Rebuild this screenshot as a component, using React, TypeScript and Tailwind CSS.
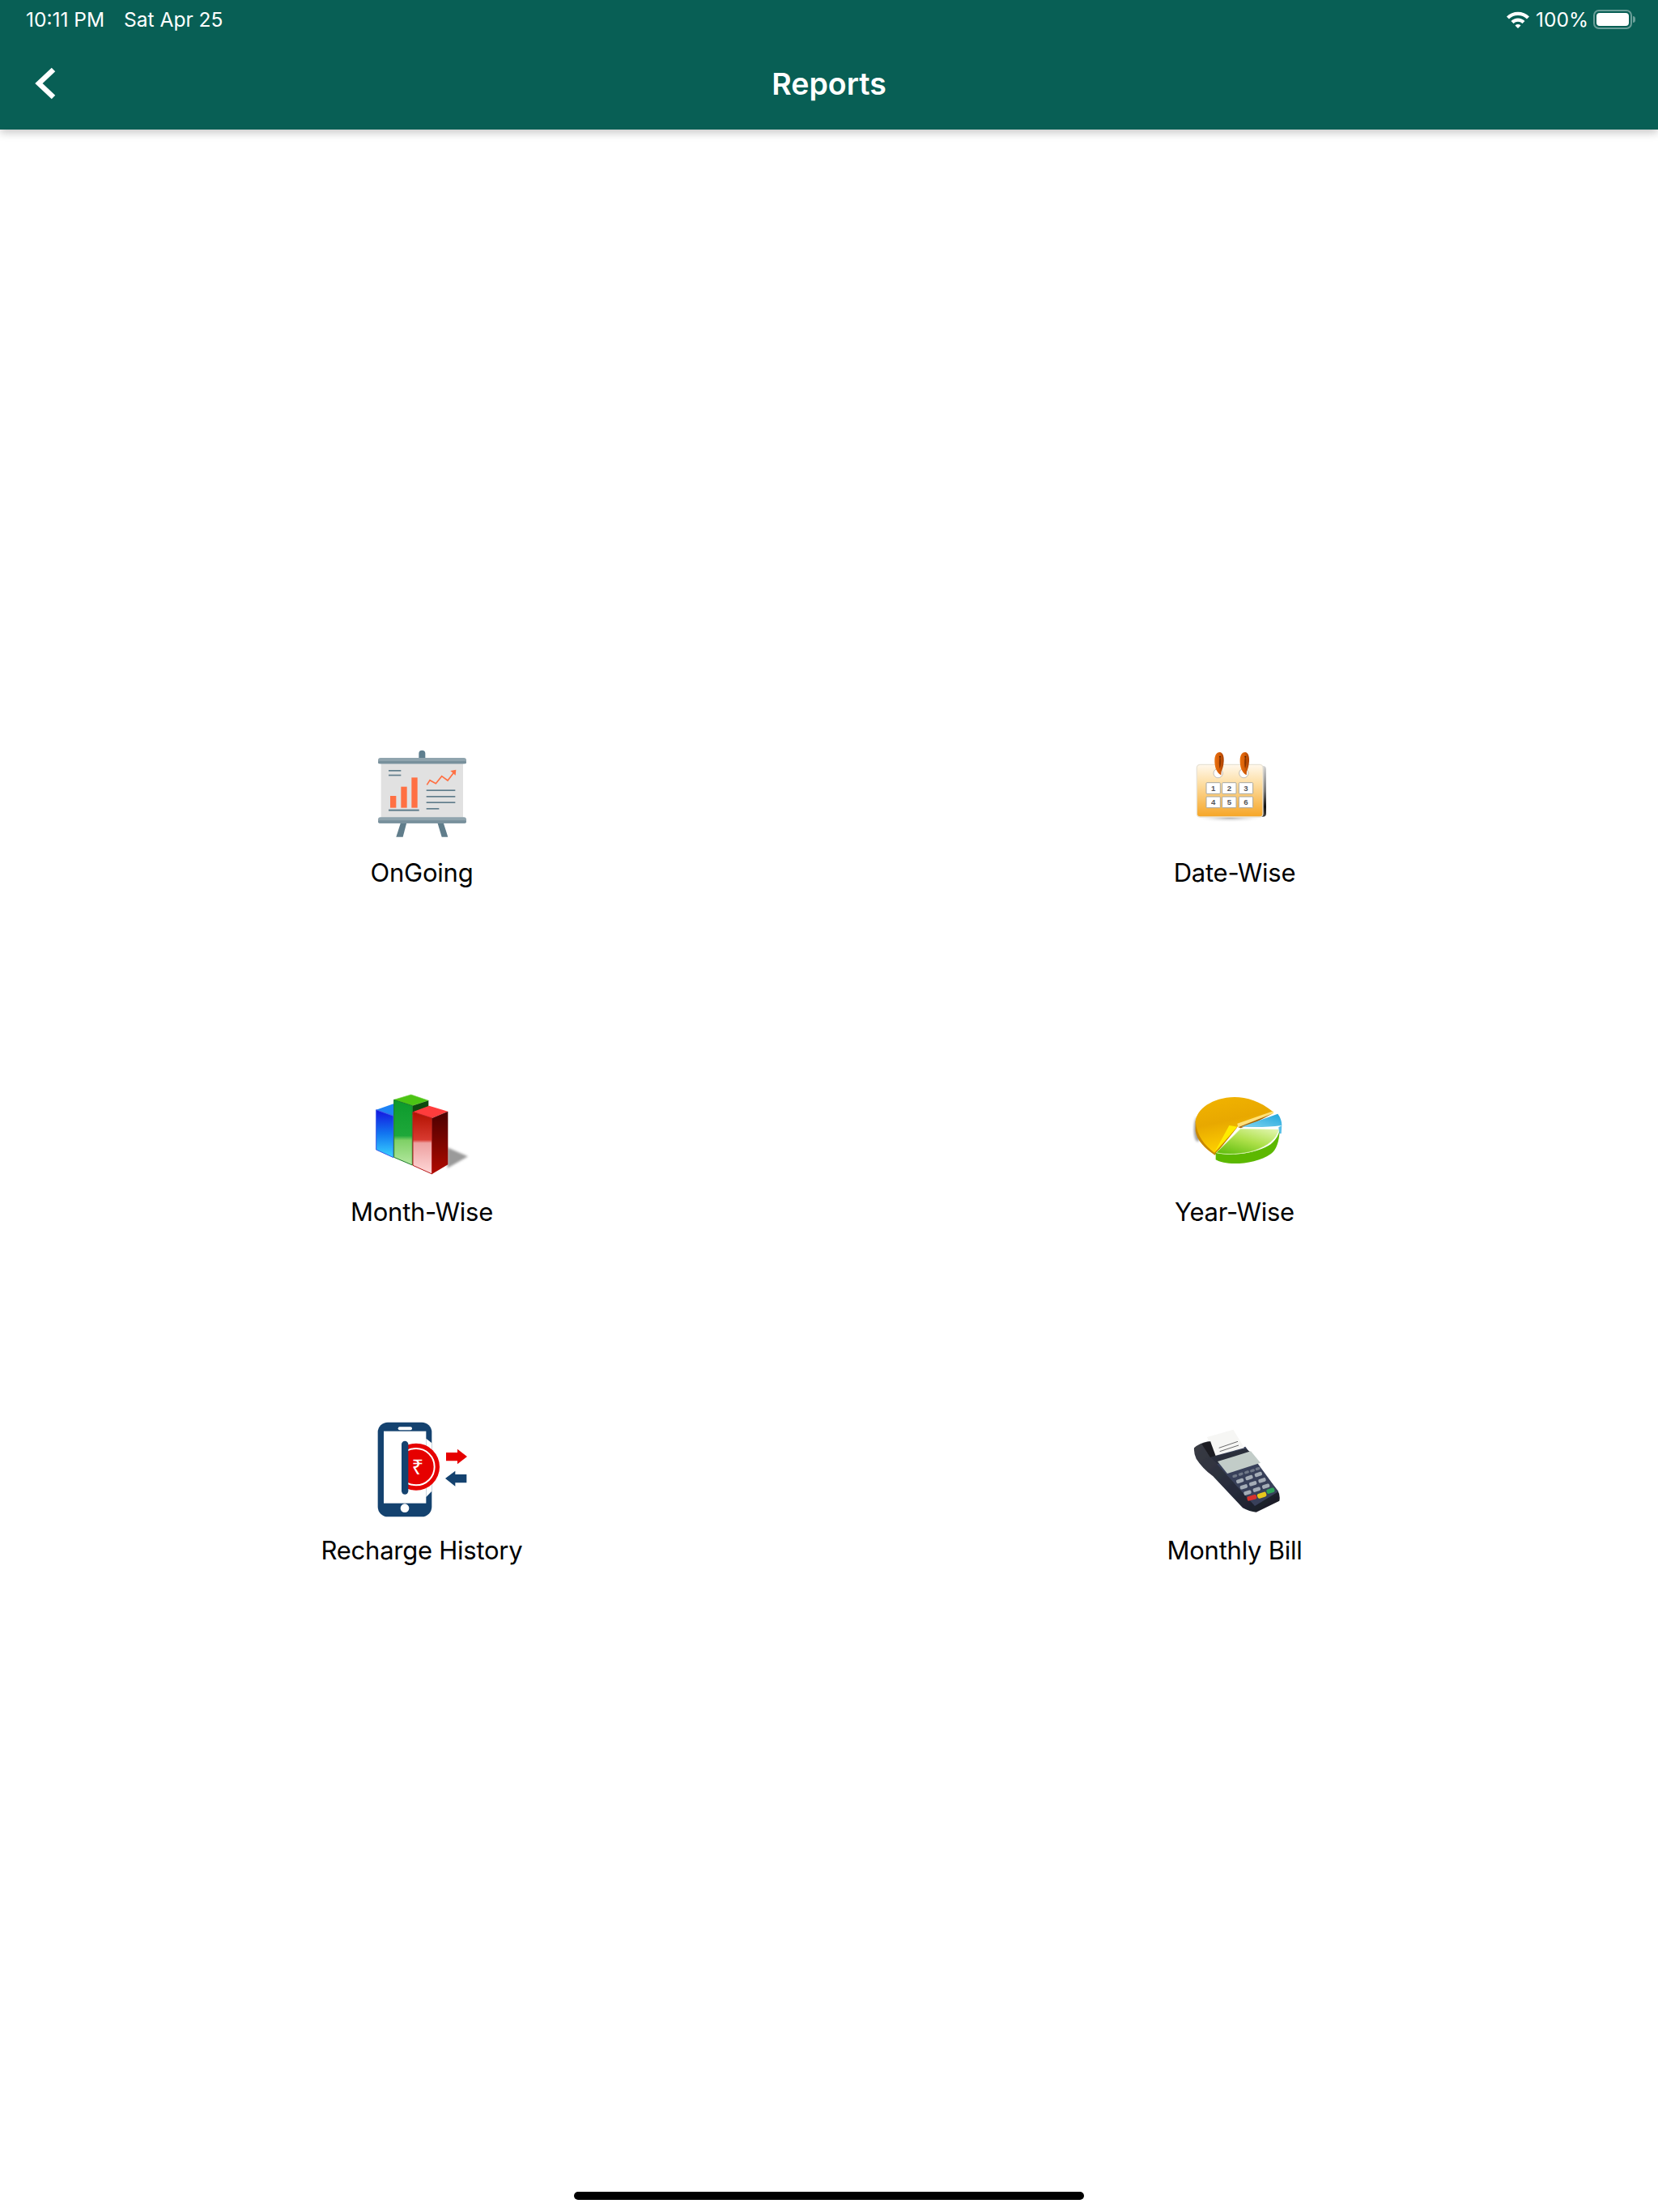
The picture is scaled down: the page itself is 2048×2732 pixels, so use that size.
import React from "react";

function OnGoingIcon() {
  return (
    <svg width={130} height={130} viewBox="80 18 390 390">
      <rect x={264} y={50} width={24} height={40} rx={12} fill="#5f7f8f" />
      <rect x={124} y={95} width={304} height={208} fill="#e1e1e1" />
      <polygon points="197,318 219,318 205,371 180,371" fill="#607d8b" />
      <polygon points="333,318 355,318 372,371 349,371" fill="#607d8b" />
      <rect x={113} y={78} width={327} height={22} rx={9} fill="#90a4ae" />
      <rect x={113} y={90} width={327} height={10} rx={5} fill="#78909c" />
      <rect x={113} y={298} width={327} height={22} rx={9} fill="#90a4ae" />
      <rect x={113} y={310} width={327} height={10} rx={5} fill="#78909c" />
      <rect x={152} y={123} width={46} height={5} fill="#607d8b" />
      <rect x={152} y={140} width={46} height={5} fill="#607d8b" />
      <rect x={158} y={219} width={22} height={44} fill="#ff7043" />
      <rect x={198} y={185} width={22} height={78} fill="#ff7043" />
      <rect x={237} y={151} width={22} height={112} fill="#ff7043" />
      <rect x={152} y={269} width={113} height={6} fill="#607d8b" />
      <polyline points="294,178 305,161 327,173 349,146 371,162 397,128" fill="none" stroke="#ff7043" strokeWidth={5} />
      <polygon points="381,126 402,122 400,143" fill="#ff7043" />
      <rect x={292} y={196} width={107} height={5} fill="#607d8b" />
      <rect x={292} y={219} width={107} height={5} fill="#607d8b" />
      <rect x={292} y={241} width={107} height={5} fill="#607d8b" />
      <rect x={292} y={264} width={47} height={5} fill="#607d8b" />
    </svg>
  );
}

function Ring({ dx }: { dx: number }) {
  return (
    <g transform={`translate(${dx} 0)`}>
      <path
        d="M208 142 C190 134 183 108 184 85 C185 66 193 57 203 57 C214 57 219 72 218 90 C217 106 214 118 209 128 Z"
        fill="url(#ring)"
      />
      <path d="M206 78 C209 90 207 108 203 118 C200 108 200 90 202 78 Z" fill="#8a3500" />
      <circle cx={204} cy={74} r={3} fill="#4a1e00" />
    </g>
  );
}

function DateIcon() {
  const cells: [number, number, string][] = [
    [153, 170, "1"],
    [212, 170, "2"],
    [274, 170, "3"],
    [153, 222, "4"],
    [212, 222, "5"],
    [274, 222, "6"],
  ];
  return (
    <svg width={130} height={130} viewBox="63 18 390 390">
      <defs>
        <linearGradient id="calBody" x1="0" y1="0" x2="0" y2="1">
          <stop offset="0" stopColor="#fff8ec" />
          <stop offset="0.35" stopColor="#fddfa6" />
          <stop offset="1" stopColor="#f6a525" />
        </linearGradient>
        <linearGradient id="calEdge" x1="0" y1="0" x2="0" y2="1">
          <stop offset="0" stopColor="#d4d4d4" />
          <stop offset="0.5" stopColor="#777777" />
          <stop offset="0.8" stopColor="#111111" />
          <stop offset="1" stopColor="#444444" />
        </linearGradient>
        <linearGradient id="ring" x1="0" y1="0" x2="1" y2="0">
          <stop offset="0" stopColor="#e8700f" />
          <stop offset="0.5" stopColor="#d85f08" />
          <stop offset="1" stopColor="#a84002" />
        </linearGradient>
        <radialGradient id="calShadow">
          <stop offset="0" stopColor="#8a8a8a" stopOpacity="0.7" />
          <stop offset="1" stopColor="#ffffff" stopOpacity="0" />
        </radialGradient>
      </defs>
      <ellipse cx={240} cy={300} rx={135} ry={18} fill="url(#calShadow)" />
      <rect x={130} y={108} width={245} height={188} rx={12} fill="url(#calEdge)" />
      <rect x={118} y={103} width={245} height={194} rx={12} fill="url(#calBody)" stroke="#e8e2d4" strokeWidth={4} />
      <circle cx={197} cy={135} r={17} fill="#ffffff" stroke="#a0a0a0" strokeWidth={2} />
      <circle cx={292} cy={135} r={17} fill="#ffffff" stroke="#a0a0a0" strokeWidth={2} />
      <Ring dx={0} />
      <Ring dx={94} />
      {cells.map(([x, y, t]) => (
        <g key={t}>
          <rect x={x} y={y} width={52} height={41} rx={3} fill="#ffffff" stroke="#a8a8a0" strokeWidth={3} />
          <text x={x + 26} y={y + 31} textAnchor="middle" fontSize={29} fontWeight={700} fontFamily="'Liberation Sans', sans-serif" fill="#55565a">
            {t}
          </text>
        </g>
      ))}
    </svg>
  );
}

function MonthIcon() {
  return (
    <svg width={130} height={130} viewBox="50 15 390 390">
      <defs>
        <linearGradient id="blueF" x1="0" y1="0" x2="0" y2="1">
          <stop offset="0" stopColor="#1414e0" />
          <stop offset="0.5" stopColor="#1276f0" />
          <stop offset="1" stopColor="#3ad4ff" />
        </linearGradient>
        <linearGradient id="greenF" x1="0" y1="0" x2="0" y2="1">
          <stop offset="0" stopColor="#0c9a2c" />
          <stop offset="0.55" stopColor="#1ea83a" />
          <stop offset="0.62" stopColor="#7fd066" />
          <stop offset="1" stopColor="#b4e8a0" />
        </linearGradient>
        <linearGradient id="redF" x1="0" y1="0" x2="0" y2="1">
          <stop offset="0" stopColor="#b21100" />
          <stop offset="0.45" stopColor="#d83a30" />
          <stop offset="0.5" stopColor="#eda0a0" />
          <stop offset="1" stopColor="#ffd8d8" />
        </linearGradient>
        <linearGradient id="redS" x1="0" y1="0" x2="0" y2="1">
          <stop offset="0" stopColor="#4a0000" />
          <stop offset="1" stopColor="#b00a00" />
        </linearGradient>
        <filter id="monthBlur">
          <feGaussianBlur stdDeviation="5" />
        </filter>
      </defs>
      <polygon points="340,262 416,295 340,338" fill="#9a9a9a" filter="url(#monthBlur)" />
      <polygon points="76,122 140,100 165,122 140,145" fill="#1e82f5" />
      <polygon points="76,122 140,145 140,299 76,270" fill="url(#blueF)" stroke="#3a58e8" strokeWidth={3} />
      <polygon points="142,85 205,66 270,88 210,107" fill="#4cc414" stroke="#6fd040" strokeWidth={2} />
      <polygon points="210,107 270,88 270,125 210,140" fill="#0f4a0f" />
      <polygon points="142,85 210,107 210,327 142,298" fill="url(#greenF)" stroke="#1d7c2a" strokeWidth={3} />
      <polygon points="212,130 272,107 342,128 283,153" fill="#ff3c3c" />
      <polygon points="212,130 283,153 283,360 212,328" fill="url(#redF)" stroke="#b81c1c" strokeWidth={3} />
      <polygon points="283,153 342,128 342,325 283,360" fill="url(#redS)" />
    </svg>
  );
}

function YearIcon() {
  return (
    <svg width={130} height={130} viewBox="30 0 390 390">
      <defs>
        <linearGradient id="yTop" x1="0" y1="0" x2="0.3" y2="1">
          <stop offset="0" stopColor="#f2b400" />
          <stop offset="0.5" stopColor="#e8a800" />
          <stop offset="1" stopColor="#ffd200" />
        </linearGradient>
        <linearGradient id="gTop" x1="0.9" y1="0" x2="0.2" y2="1">
          <stop offset="0" stopColor="#e0f5ac" />
          <stop offset="0.5" stopColor="#aee04a" />
          <stop offset="1" stopColor="#66c012" />
        </linearGradient>
        <linearGradient id="bTop" x1="0" y1="1" x2="1" y2="0">
          <stop offset="0" stopColor="#7fd4ef" />
          <stop offset="1" stopColor="#1fa5dc" />
        </linearGradient>
        <filter id="yearBlur">
          <feGaussianBlur stdDeviation="5" />
        </filter>
      </defs>
      <ellipse cx={88} cy={180} rx={14} ry={45} fill="#a0a0a0" filter="url(#yearBlur)" />
      <path d="M80 150 L80 185 C85 220 115 250 152 275 L235 172 L80 150Z" fill="#c98800" />
      <path d="M368 115 C320 75 270 60 225 60 C140 62 85 105 80 150 C85 205 115 240 150 266 L235 170 Z" fill="url(#yTop)" />
      <path d="M235 158 L368 112 L370 120 L238 172 Z" fill="#ffe27a" />
      <path d="M238 172 L368 120 L300 155 L248 175 Z" fill="#a86400" />
      <path d="M150 266 L205 165 L235 170 Z" fill="#ffec00" />
      <path d="M250 170 L385 122 C395 135 400 150 400 165 C350 172 300 172 250 170Z" fill="url(#bTop)" />
      <path d="M400 165 L398 195 L390 195 L388 172 Z" fill="#58c0e8" />
      <path d="M155 266 L155 292 C190 315 300 312 360 270 C380 255 390 225 392 185 C385 205 375 225 350 240 C300 270 210 280 155 266Z" fill="#5cb800" />
      <path d="M247 178 L388 181 C380 215 350 240 300 258 C255 272 195 275 157 266Z" fill="url(#gTop)" stroke="#d8f2a8" strokeWidth={2} />
    </svg>
  );
}

function RechargeIcon() {
  const blue = "#14426f";
  const red = "#e60000";
  return (
    <svg width={130} height={130} viewBox="21 24 390 390">
      <rect x={53} y={35} width={200} height={350} rx={37} fill={blue} />
      <rect x={75} y={68} width={157} height={267} fill="#ffffff" />
      <polygon points="232,95 253,112 253,290 232,312" fill="#ffffff" />
      <rect x={128} y={52} width={52} height={12} rx={6} fill="#ffffff" />
      <circle cx={153} cy={353} r={16} fill="#ffffff" />
      <circle cx={195} cy={200} r={87} fill={red} />
      <circle cx={195} cy={200} r={68} fill="none" stroke="#ffffff" strokeWidth={6} />
      <rect x={100} y={100} width={54} height={210} fill="#ffffff" />
      <rect x={141} y={104} width={25} height={198} rx={12.5} fill={blue} />
      <text x={201} y={228} textAnchor="middle" fontSize={78} fontWeight={400} fontFamily="'Noto Sans', 'DejaVu Sans', sans-serif" fill="#ffffff">
        ₹
      </text>
      <polygon points="306,147 348,147 348,134 384,162 348,190 348,178 306,178" fill={red} />
      <polygon points="382,228 340,228 340,215 303,243 340,272 340,259 382,259" fill={blue} />
    </svg>
  );
}

function BillIcon() {
  const keys: [number, number][] = [
    [211, 204], [233, 197], [255, 190], [276, 184], [296, 177],
    [230, 222], [264, 210], [298, 198],
    [244, 244], [278, 232], [312, 220],
    [258, 266], [292, 254], [326, 242],
  ];
  return (
    <svg width={130} height={130} viewBox="15 -6 390 390">
      <defs>
        <filter id="billBlur">
          <feGaussianBlur stdDeviation="1" />
        </filter>
        <linearGradient id="posBody" x1="0" y1="0" x2="1" y2="1">
          <stop offset="0" stopColor="#3a3c44" />
          <stop offset="0.6" stopColor="#252a3a" />
          <stop offset="1" stopColor="#181a22" />
        </linearGradient>
      </defs>
      <g filter="url(#billBlur)">
        <path d="M60 100 Q80 82 112 76 L240 100 L370 258 Q380 275 376 296 L290 338 Q265 336 240 322 L130 205 Q90 175 68 140 Q58 118 60 100Z" fill="url(#posBody)" />
        <polygon points="122,135 250,95 372,262 285,315" fill="#39415a" />
        <polygon points="108,60 205,32 246,100 135,130" fill="#f6f6f4" />
        <polygon points="88,85 120,75 140,130 120,135" fill="#1c1c20" />
        <g stroke="#6a6a6a" strokeWidth={3}>
          <line x1="152" y1="100" x2="222" y2="76" />
          <line x1="155" y1="113" x2="225" y2="90" />
        </g>
        <polygon points="122,135 250,102 272,118 145,160" fill="#2a2e3a" />
        <polygon points="147,150 270,112 306,155 183,195" fill="#c2ccc8" />
        {keys.map(([x, y], i) => {
          const small = i < 5;
          const w = small ? 18 : 28;
          const h = small ? 10 : 14;
          return (
            <rect
              key={i}
              x={x - w / 2}
              y={y - h / 2}
              width={w}
              height={h}
              rx={5}
              fill={small ? "#6f7888" : "#a4acb6"}
              transform={`rotate(-18 ${x} ${y})`}
            />
          );
        })}
        <rect x={256} y={276} width={36} height={17} rx={6} fill="#d7332f" transform="rotate(-15 274 284)" />
        <rect x={294} y={266} width={34} height={18} rx={6} fill="#e8c81a" transform="rotate(-18 311 275)" />
        <rect x={328} y={250} width={30} height={17} rx={6} fill="#2fa35a" transform="rotate(-18 343 258)" />
      </g>
    </svg>
  );
}

const items: [React.ComponentType, string][] = [
  [OnGoingIcon, "OnGoing"],
  [DateIcon, "Date-Wise"],
  [MonthIcon, "Month-Wise"],
  [YearIcon, "Year-Wise"],
  [RechargeIcon, "Recharge History"],
  [BillIcon, "Monthly Bill"],
];

export default function App() {
  return (
    <div className="w-[2048px] h-[2732px] bg-white flex flex-col overflow-hidden font-['Inter','Liberation_Sans',sans-serif]">
      <header className="h-[160px] shrink-0 bg-[#085f55] text-white shadow-[0_4px_10px_rgba(0,0,0,0.22)] relative z-10">
        <div className="h-[48px] pl-[32px] pr-[28px] flex items-center justify-between text-[24.5px] leading-none">
          <div className="flex gap-[24px]">
            <span>10:11 PM</span>
            <span>Sat Apr 25</span>
          </div>
          <div className="flex items-center">
            <svg width={30} height={22} viewBox="0 0 30 22">
              <path d="M1 7.5 A20 20 0 0 1 29 7.5 L26 10.5 A16 16 0 0 0 4 10.5Z" fill="#fff" />
              <path d="M6.5 13 A12 12 0 0 1 23.5 13 L20.5 16 A8 8 0 0 0 9.5 16Z" fill="#fff" />
              <path d="M15 22 L11.5 18.5 A5 5 0 0 1 18.5 18.5Z" fill="#fff" />
            </svg>
            <span className="ml-[7px]">100%</span>
            <div className="ml-[6px] w-[48px] h-[24px] rounded-[7px] border-2 border-white/40 p-[2px]">
              <div className="w-full h-full rounded-[4px] bg-white" />
            </div>
            <div className="ml-[1px] w-[3px] h-[8px] rounded-r-[3px] bg-white/40" />
          </div>
        </div>
        <div className="h-[112px] grid grid-cols-[1fr_auto_1fr] items-center">
          <svg width={34} height={48} viewBox="0 0 34 48" className="ml-[39px] -mt-[2px]">
            <polyline points="27,7 9,24 27,41" fill="none" stroke="#fff" strokeWidth={6.5} />
          </svg>
          <h1 className="text-[37.5px] leading-none font-semibold -mt-[1px]">Reports</h1>
        </div>
      </header>
      <main className="flex-1 pt-[756px] pl-[19px] pr-[21px] grid grid-cols-2 auto-rows-[418.5px]">
        {items.map(([Icon, label]) => (
          <div key={label} className="flex flex-col items-center">
            <Icon />
            <span className="mt-[12px] text-[31px] tracking-[-0.25px] leading-[40px] text-black">{label}</span>
          </div>
        ))}
      </main>
      <div className="h-[25px] shrink-0 flex justify-center">
        <div className="w-[630px] h-[10px] rounded-full bg-black" />
      </div>
    </div>
  );
}
